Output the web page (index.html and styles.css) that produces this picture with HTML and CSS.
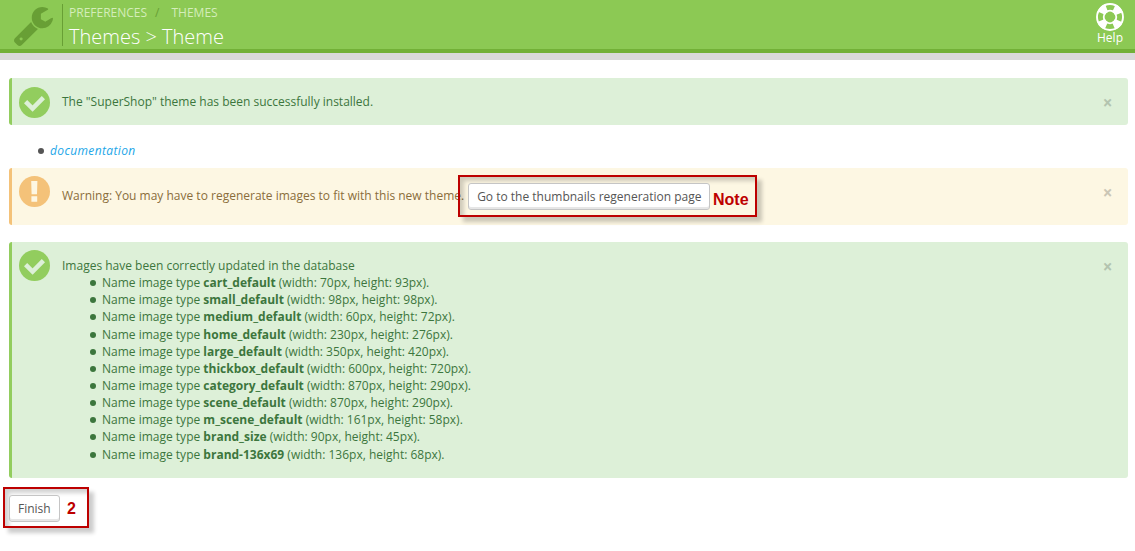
FILE: index.html
```html
<!DOCTYPE html>
<html lang="en">
<head>
<meta charset="utf-8">
<title>Themes &gt; Theme</title>
<link rel="stylesheet" href="styles.css">
</head>
<body>
<header class="page-head">
  <svg class="wrench" viewBox="21 -1408 1641 1643" aria-hidden="true"><path transform="scale(1,-1)" d="M384 64q0 26-19 45t-45 19-45-19-19-45 19-45 45-19 45 19 19 45zm644 420l-682-682q-37-37-90-37-52 0-91 37l-106 108q-38 36-38 90 0 53 38 91l681 681q39-98 114.5-173.5t173.5-114.5zm634 435q0-39-23-106-47-134-164.5-217.5t-258.5-83.5q-185 0-316.5 131.5t-131.5 316.5 131.5 316.5 316.5 131.5q58 0 121.5-16.5t107.5-46.5q16-11 16-28t-16-28l-293-169v-224l193-107q5 3 79 48.5t135.5 81 70.5 35.5q15 0 23.5-10t8.5-25z"/></svg>
  <div class="titles">
    <nav class="crumbs"><span>PREFERENCES</span><span class="slash">/</span><span>THEMES</span></nav>
    <h1>Themes &gt; Theme</h1>
  </div>
  <a class="help">
    <svg viewBox="0 0 28 28" aria-hidden="true">
      <g fill="none" stroke="#fff">
        <circle cx="14" cy="14" r="9.5" stroke-width="8.2" stroke-dasharray="7.46 7.46" stroke-dashoffset="-3.73"/>
        <circle cx="14" cy="14" r="13" stroke-width="1.9"/>
        <circle cx="14" cy="14" r="6.3" stroke-width="1.8"/>
      </g>
    </svg>
    <span>Help</span>
  </a>
</header>
<main>
  <section class="alert success first">
    <svg class="mark" viewBox="0 0 31 31" aria-hidden="true"><circle cx="15.5" cy="15.5" r="15.5"/><path d="M6.6 14.6l7 7L24.4 10.6"/></svg>
    <p>The "SuperShop" theme has been successfully installed.</p>
    <span class="close">×</span>
  </section>
  <ul class="docs"><li><a>documentation</a></li></ul>
  <section class="alert warning">
    <svg class="mark" viewBox="0 0 31 31" aria-hidden="true"><circle cx="15.5" cy="15.5" r="15.5"/><path class="bang" d="M12.2 5h6.2l-.4 13.2h-5.4zM12.4 20.2h5.8v5.6h-5.8z"/></svg>
    <p>Warning: You may have to regenerate images to fit with this new theme.</p>
    <a class="btn regen">Go to the thumbnails regeneration page</a>
    <span class="close">×</span>
    <div class="callout note"><b>Note</b></div>
  </section>
  <section class="alert success images">
    <svg class="mark" viewBox="0 0 31 31" aria-hidden="true"><circle cx="15.5" cy="15.5" r="15.5"/><path d="M6.6 14.6l7 7L24.4 10.6"/></svg>
    <div class="body">
      <p>Images have been correctly updated in the database</p>
      <ul>
        <li>Name image type <b>cart_default</b> (width: 70px, height: 93px).</li>
        <li>Name image type <b>small_default</b> (width: 98px, height: 98px).</li>
        <li>Name image type <b>medium_default</b> (width: 60px, height: 72px).</li>
        <li>Name image type <b>home_default</b> (width: 230px, height: 276px).</li>
        <li>Name image type <b>large_default</b> (width: 350px, height: 420px).</li>
        <li>Name image type <b>thickbox_default</b> (width: 600px, height: 720px).</li>
        <li>Name image type <b>category_default</b> (width: 870px, height: 290px).</li>
        <li>Name image type <b>scene_default</b> (width: 870px, height: 290px).</li>
        <li>Name image type <b>m_scene_default</b> (width: 161px, height: 58px).</li>
        <li>Name image type <b>brand_size</b> (width: 90px, height: 45px).</li>
        <li>Name image type <b>brand-136x69</b> (width: 136px, height: 68px).</li>
      </ul>
    </div>
    <span class="close">×</span>
  </section>
  <div class="actions">
    <a class="btn finish">Finish</a>
    <div class="callout step"><b>2</b></div>
  </div>
</main>
</body>
</html>
```
FILE: styles.css
```css
* { box-sizing: border-box; }
body { margin: 0; height: 551px; overflow: hidden; background: #fff; color: #555; font: 12px/17.14px "Open Sans", "Noto Sans", sans-serif; }
p, ul, h1 { margin: 0; padding: 0; }
ul { list-style: none; }
li::before { content: ""; display: inline-block; width: 6px; height: 6px; margin: 0 6px 1px -12px; border-radius: 50%; background: currentColor; }
.page-head { display: flex; height: 60px; background: linear-gradient(#8cc954 0 49px, #72b037 49px 53px, #d9d9d9 53px); }
.wrench { width: 39px; height: 39px; margin: 7px 9px 0 14px; fill: #689f35; }
.titles { height: 42px; margin-top: 4px; padding-left: 6px; border-left: 1px solid #689f35; }
.crumbs { display: flex; height: 18px; line-height: 18px; color: #d4edba; }
.slash { margin: 0 12px 0 8px; color: #689f35; }
h1 { font-size: 20px; line-height: 30px; font-weight: 300; color: #fff; }
.help { display: flex; flex-direction: column; align-items: center; width: 40px; margin: 3px 5px 0 auto; color: #fff; line-height: 13px; }
.help svg { width: 28px; height: 28px; }
main { padding: 18px 7px 0 9px; }
.alert { position: relative; display: flex; border-left: 3px solid; border-radius: 3px; }
.success { background: #ddf0d8; border-color: #92cd5e; color: #3c763d; }
.warning { height: 57px; background: #fdf7e3; border-color: #f4c279; color: #8a6d3b; }
.first { height: 47px; padding-top: 15px; }
.mark { flex: none; width: 31px; height: 31px; margin: 8px 12px 0 7px; fill: #92cd5e; }
.mark path { fill: none; stroke: #ddf0d8; stroke-width: 4.5; }
.warning .mark { fill: #f4c279; }
.warning .mark .bang { fill: #fdf7e3; stroke: none; }
.first .mark { margin-top: -6px; }
.close { margin: 16px 15px 0 auto; width: 11px; text-align: center; font-size: 17px; line-height: 18px; font-weight: 700; color: #b3c4af; }
.first .close { margin-top: 1px; }
.warning .close { color: #cbc6b5; }
.docs { height: 43px; padding: 17px 0 0 41px; color: #555; }
.docs a { color: #1ba6e8; font-style: italic; letter-spacing: .37px; }
.warning p { padding-top: 19px; }
.btn { display: block; height: 27px; padding: 4px 8px 0; white-space: nowrap; background: #fff; color: #555; border: 1px solid #c5c5c5; border-radius: 3px; box-shadow: inset 0 -2px #e6e6e6; }
.regen { margin: 15px 0 0 4px; width: 242px; }
.images { height: 236px; margin-top: 17px; }
.body { padding-top: 15px; }
.body ul { padding-left: 40px; }
.actions { position: relative; padding-top: 17px; }
.finish { width: 51px; }
.btn { position: relative; z-index: 1; }
.callout { position: absolute; border: 2px solid #bd0000; color: #bd0000; box-shadow: 5px 5px 4px rgba(0,0,0,.2), inset 4px 4px 4px rgba(0,0,0,.18); font: 700 16px/20px "Liberation Sans", Arial, sans-serif; }
.note { left: 446px; top: 7px; width: 299px; height: 42px; padding: 13px 0 0 253px; }
.step { left: -6px; top: 9px; width: 86px; height: 41px; padding: 10px 0 0 62px; }
```
